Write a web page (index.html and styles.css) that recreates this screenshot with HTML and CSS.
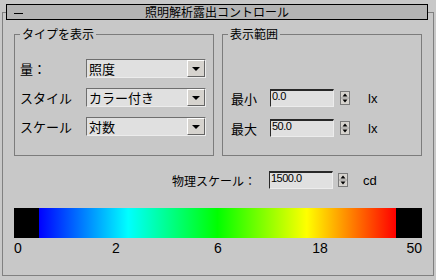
FILE: index.html
```html
<!DOCTYPE html>
<html>
  <head>
    <title>照明解析露出コントロール</title>
    <meta charset='UTF-8'>
    <link rel="stylesheet" href="styles.css">
  </head>
  <body>
    <div class='rollout'>
      <div class='titleBar'>
        <span class='minus'></span>
        <span class='titleText'>照明解析露出コントロール</span>
        <span class='titleSpacer'></span>
      </div>

      <div class='groups'>
        <fieldset class='group'>
          <legend>タイプを表示</legend>
          <div class='typeRows'>
            <span class='rowLabel'>量：</span>
            <div class='dropdown'><span class='dropText'>照度</span><span class='dropButton'></span></div>

            <span class='rowLabel'>スタイル</span>
            <div class='dropdown'><span class='dropText'>カラー付き</span><span class='dropButton'></span></div>

            <span class='rowLabel'>スケール</span>
            <div class='dropdown'><span class='dropText'>対数</span><span class='dropButton'></span></div>
          </div>
        </fieldset>

        <fieldset class='group'>
          <legend>表示範囲</legend>
          <div class='rangeRows'>
            <div class='spinRow'>
              <span class='rangeLabel'>最小</span>
              <span class='numField'>0.0</span>
              <svg class='spinner' width='10' height='14' viewBox='0 0 10 14'>
                <rect x='0.5' y='0.5' width='9' height='13' fill='#d6d3ce' stroke='#7a7a7a'/>
                <line x1='1' y1='7' x2='9' y2='7' stroke='#9a9a9a'/>
                <polygon points='5,2.5 7.5,5.5 2.5,5.5' fill='#000'/>
                <polygon points='2.5,8.5 7.5,8.5 5,11.5' fill='#000'/>
              </svg>
              <span class='unit'>lx</span>
            </div>
            <div class='spinRow'>
              <span class='rangeLabel'>最大</span>
              <span class='numField'>50.0</span>
              <svg class='spinner' width='10' height='14' viewBox='0 0 10 14'>
                <rect x='0.5' y='0.5' width='9' height='13' fill='#d6d3ce' stroke='#7a7a7a'/>
                <line x1='1' y1='7' x2='9' y2='7' stroke='#9a9a9a'/>
                <polygon points='5,2.5 7.5,5.5 2.5,5.5' fill='#000'/>
                <polygon points='2.5,8.5 7.5,8.5 5,11.5' fill='#000'/>
              </svg>
              <span class='unit'>lx</span>
            </div>
          </div>
        </fieldset>
      </div>

      <div class='scaleRow'>
        <span class='scaleLabel'>物理スケール：</span>
        <span class='numField'>1500.0</span>
        <svg class='spinner' width='10' height='14' viewBox='0 0 10 14'>
          <rect x='0.5' y='0.5' width='9' height='13' fill='#d6d3ce' stroke='#7a7a7a'/>
          <line x1='1' y1='7' x2='9' y2='7' stroke='#9a9a9a'/>
          <polygon points='5,2.5 7.5,5.5 2.5,5.5' fill='#000'/>
          <polygon points='2.5,8.5 7.5,8.5 5,11.5' fill='#000'/>
        </svg>
        <span class='unit'>cd</span>
      </div>

      <div class='colorBar'>
        <div class='barBlack'></div>
        <div class='barGradient'></div>
        <div class='barBlack barEnd'></div>
      </div>

      <div class='ticks'>
        <span class='tick tickStart'>0</span>
        <span class='tick'>2</span>
        <span class='tick'>6</span>
        <span class='tick'>18</span>
        <span class='tick tickEnd'>50</span>
      </div>
    </div>
  </body>
</html>
```

FILE: styles.css
```css
:root {
  font-family: "Noto Sans CJK JP", "Liberation Sans", sans-serif;
  font-size: 12px;
  background-color: rgb(200, 200, 200);
  color: #000;
}

body {
  margin: 0;
  padding-top: 12px;
}

.rollout {
  box-sizing: border-box;
  height: 264px;
  margin: 0 2px;
  border: 1px solid rgb(128, 128, 128);
}

/* title bar sits on the top edge of the rollout */
.titleBar {
  display: flex;
  align-items: center;
  box-sizing: border-box;
  height: 16px;
  margin: -9px 5px 0 3px;
  background-color: rgb(180, 180, 180);
  border: 1px solid #000;
  line-height: 14px;
}

.minus {
  align-self: flex-start;
  width: 9px;
  height: 1px;
  margin: 8px 0 0 7px;
  background-color: #000;
}

.titleText {
  flex: 1;
  text-align: center;
}

.titleSpacer {
  width: 16px;
}

.groups {
  display: flex;
  gap: 8px;
  margin: 7px 11px 0;
}

.group {
  box-sizing: border-box;
  width: 200px;
  height: 129px;
  min-inline-size: 0;
  margin: 0;
  padding: 0;
  border: 1px solid rgb(124, 124, 124);
}

.group legend {
  margin-left: 5px;
  padding: 0 2px;
  line-height: 14px;
}

.typeRows {
  display: grid;
  grid-template-columns: 66px 120px;
  grid-auto-rows: 19px;
  row-gap: 10px;
  align-items: center;
  padding: 18px 0 0 5px;
}

.rowLabel {
  font-size: 13px;
  line-height: 19px;
}

.dropdown {
  display: flex;
  box-sizing: border-box;
  height: 19px;
  background-color: rgb(224, 224, 224);
  border-top: 1px solid rgb(110, 110, 110);
  border-left: 1px solid rgb(110, 110, 110);
  border-right: 1px solid rgb(236, 236, 236);
  border-bottom: 1px solid rgb(236, 236, 236);
}

.dropText {
  flex: 1;
  padding-left: 2px;
  font-size: 13px;
  line-height: 17px;
}

.dropButton {
  position: relative;
  box-sizing: border-box;
  width: 18px;
  background-color: rgb(214, 211, 206);
  border-top: 1px solid #fff;
  border-left: 1px solid #fff;
  border-right: 1px solid rgb(100, 100, 100);
  border-bottom: 1px solid rgb(100, 100, 100);
}

/* small down arrow on the button */
.dropButton::after {
  content: '';
  position: absolute;
  left: 4px;
  top: 6px;
  border-left: 4px solid transparent;
  border-right: 4px solid transparent;
  border-top: 4px solid #000;
}

.rangeRows {
  display: flex;
  flex-direction: column;
  gap: 12px;
  padding: 48px 0 0 8px;
}

.spinRow {
  display: flex;
  align-items: center;
  height: 18px;
}

.rangeLabel {
  width: 39px;
  font-size: 13px;
}

.numField {
  box-sizing: border-box;
  width: 64px;
  height: 18px;
  padding-left: 1px;
  background-color: rgb(224, 224, 224);
  border-top: 2px solid rgb(40, 40, 40);
  border-left: 1px solid rgb(40, 40, 40);
  border-right: 1px solid rgb(236, 236, 236);
  border-bottom: 1px solid rgb(236, 236, 236);
  font-family: "Liberation Sans", sans-serif;
  font-size: 11px;
  letter-spacing: -0.5px;
  line-height: 11px;
  align-self: flex-start;
}

.spinner {
  margin-left: 6px;
}

.unit {
  margin-left: 18px;
  font-family: "Liberation Sans", sans-serif;
  font-size: 13px;
}

.scaleRow {
  display: flex;
  align-items: center;
  height: 18px;
  margin-top: 15px;
  padding-left: 169px;
}

.scaleLabel {
  width: 97px;
  font-size: 12px;
}

.scaleRow .spinner {
  margin-left: 5px;
}

.scaleRow .unit {
  margin-left: 15px;
}

.colorBar {
  display: flex;
  height: 30px;
  margin: 19px 11px 0;
}

.barBlack {
  width: 25px;
  background-color: #000;
}

.barEnd {
  width: 26px;
}

.barGradient {
  flex: 1;
  background: linear-gradient(90deg, rgb(0, 0, 255), rgb(0, 255, 255) 25%, rgb(0, 255, 0) 50%, rgb(255, 255, 0) 75%, rgb(255, 0, 0));
}

.ticks {
  display: flex;
  justify-content: space-between;
  margin: 2px 11px 0;
  font-family: "Liberation Sans", sans-serif;
  font-size: 14px;
  line-height: 16px;
}

.tick {
  display: flex;
  justify-content: center;
  width: 0;
  white-space: nowrap;
}

.tickStart {
  justify-content: flex-start;
}

.tickEnd {
  justify-content: flex-end;
}
```
